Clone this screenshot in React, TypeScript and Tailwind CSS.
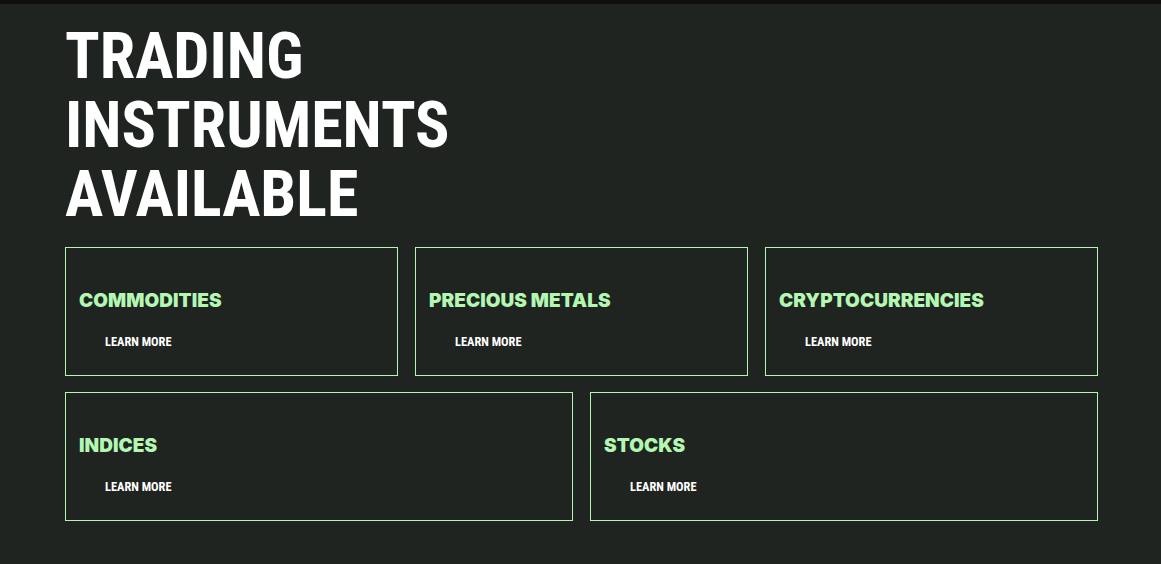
import React from "react";

const cards1 = ["COMMODITIES", "PRECIOUS METALS", "CRYPTOCURRENCIES"];
const cards2 = ["INDICES", "STOCKS"];

function Card({ title }: { title: string }) {
  return (
    <div className="h-[129px] border border-[#b3f7b3] pl-[13px] pt-[41px]">
      <h3
        className="text-[19px] leading-[24px] font-black text-[#b3f7b3] tracking-[0.05px]"
        style={{ fontFamily: "Inter, 'Noto Sans', sans-serif" }}
      >
        {title}
      </h3>
      <a
        className="mt-[21px] ml-[26px] block text-[12.4px] leading-[16px] font-bold text-white"
        style={{ fontFamily: "Roboto, sans-serif", fontStretch: "condensed" }}
      >
        LEARN MORE
      </a>
    </div>
  );
}

export default function App() {
  return (
    <div className="min-h-[564px] bg-[#202420] border-t-4 border-[#0f0f10]">
      <div className="ml-[65px] w-[1033px] pt-[18px]">
        <h1
          className="text-[64px] leading-[69px] font-bold text-white"
          style={{ fontFamily: "Roboto, sans-serif", fontStretch: "condensed" }}
        >
          TRADING
          <br />
          INSTRUMENTS
          <br />
          AVAILABLE
        </h1>
        <div className="mt-[18px] grid grid-cols-3 gap-[17px]">
          {cards1.map((c) => (
            <Card key={c} title={c} />
          ))}
        </div>
        <div className="mt-[16px] grid grid-cols-2 gap-[17px]">
          {cards2.map((c) => (
            <Card key={c} title={c} />
          ))}
        </div>
      </div>
    </div>
  );
}
